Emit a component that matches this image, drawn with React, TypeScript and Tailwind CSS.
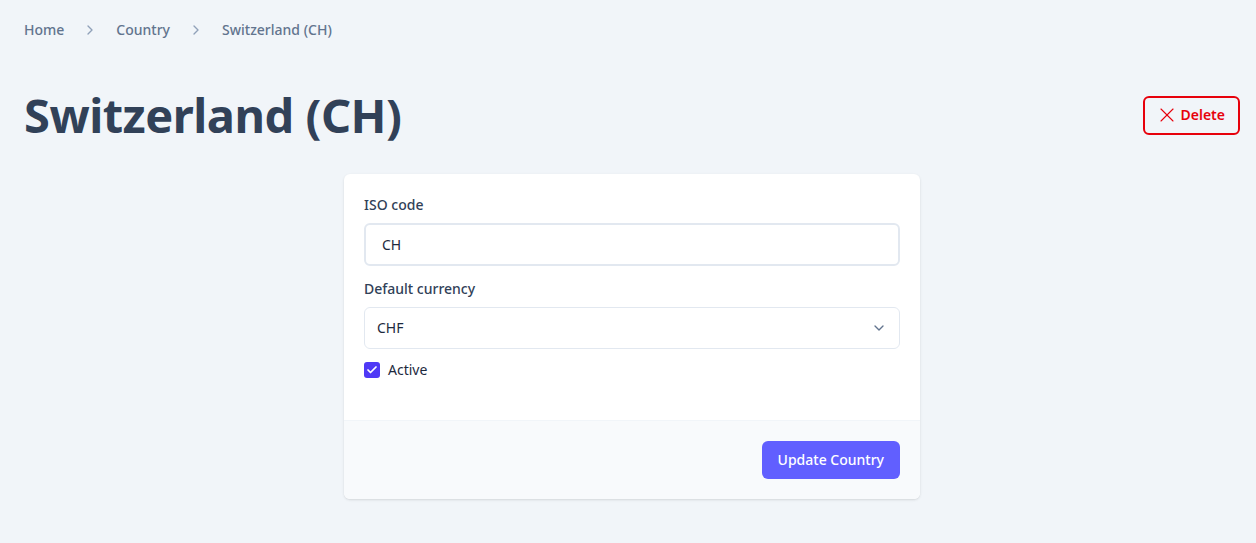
import { ChevronRight, ChevronDown, X, Check } from 'lucide-react';

export default function App() {
  return (
    <div className="min-h-screen bg-[#f1f5f9] pl-6 pr-4 font-['Noto_Sans',sans-serif] text-slate-700">
      <nav className="flex h-[60px] items-center text-sm font-medium text-slate-500">
        <span>Home</span>
        <ChevronRight className="mx-[18px] h-4 w-4 text-slate-400" />
        <span>Country</span>
        <ChevronRight className="mx-[18px] h-4 w-4 text-slate-400" />
        <span>Switzerland (CH)</span>
      </nav>

      <div className="mt-[24px] flex items-center justify-between">
        <h1 className="text-[47px] font-bold leading-[62px] tracking-[-0.5px] text-slate-700">Switzerland (CH)</h1>
        <button className="flex h-[39px] items-center gap-0.5 rounded-md border-2 border-red-600 pr-[13px] pl-[10px] text-sm font-semibold text-red-600">
          <X className="h-6 w-6" strokeWidth={1.1} />
          Delete
        </button>
      </div>

      <div className="mx-auto mt-[28px] w-[576px] overflow-hidden rounded-md bg-white shadow">
        <div className="px-5 pt-[21px] pb-[40px]">
          <label className="block text-sm font-medium text-slate-700">ISO code</label>
          <div className="mt-2 flex h-[43px] items-center rounded-md border-2 border-slate-200 px-4 text-sm text-slate-800">
            CH
          </div>

          <label className="mt-[13px] block text-sm font-medium text-slate-700">Default currency</label>
          <div className="mt-2 flex h-[42px] items-center justify-between rounded-md border border-slate-200 pl-3 pr-3 text-sm text-slate-800">
            <span>CHF</span>
            <ChevronDown className="h-4 w-4 text-slate-500" />
          </div>

          <div className="mt-[11px] flex items-center gap-2">
            <span className="flex h-4 w-4 items-center justify-center rounded-[3px] bg-indigo-600">
              <Check className="h-3 w-3 text-white" strokeWidth={3.5} />
            </span>
            <span className="text-sm text-slate-800">Active</span>
          </div>
        </div>
        <div className="flex justify-end border-t border-slate-100 bg-slate-50 px-5 py-5">
          <button className="h-[38px] rounded-md bg-indigo-500 px-4 text-sm font-medium text-white">
            Update Country
          </button>
        </div>
      </div>
    </div>
  );
}
